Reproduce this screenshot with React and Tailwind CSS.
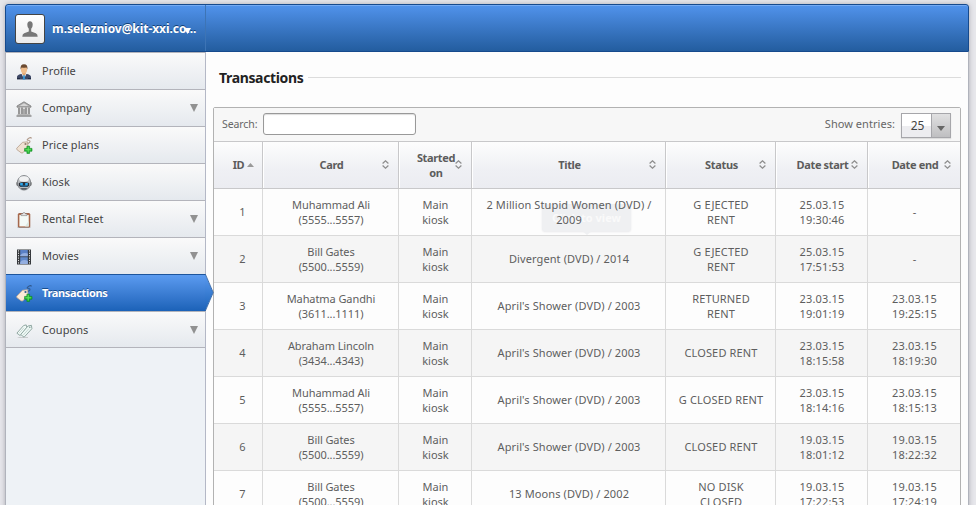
import React from 'react';

const ProfileIcon = () => (
  <svg width="16" height="16" viewBox="0 0 16 16">
    <path d="M1 15.500V13Q1 11 5 10h6q4 1 4 3v2.500z" fill="#3c4664" />
    <path d="M1 15h3v-1H1zM12 15h3v-1h-3z" fill="#1f2a42" />
    <path d="M5.500 9.800L8 15l2.500-5.200z" fill="#f4f6f9" />
    <path d="M7.300 11h1.400l.5 4.500H6.800z" fill="#2f8fd0" />
    <path d="M6.200 8h3.600v2.300L8 11.500 6.200 10.300z" fill="#dca06c" />
    <ellipse cx="8" cy="5.500" rx="3.100" ry="4" fill="#efbd8c" />
    <path d="M4.600 5.500Q4 .3 8 .3t3.400 5.200L10.500 3.600Q8 4 5.600 3.400z" fill="#6b4a30" />
  </svg>
);

const CompanyIcon = () => (
  <svg width="16" height="16" viewBox="0 0 16 16">
    <path d="M8 .8L15 5v1.200H1V5z" fill="#a9a9a9" stroke="#7d7d7d" strokeWidth=".8" />
    <path d="M8 2.300L12.500 5h-9z" fill="#d6d6d6" />
    <path d="M2 6.500h12V13H2z" fill="#dcdcdc" />
    <path d="M3 6.500V13M6 6.500V13M10 6.500V13M13 6.500V13" stroke="#7b7b7b" strokeWidth="1.400" />
    <path d="M7.500 8h1v5h-1z" fill="#777" />
    <path d="M1.500 13h13v1.300h-13z" fill="#b5b5b5" />
    <path d="M.5 14.300h15v1.400H.5z" fill="#848484" />
  </svg>
);

const TagIcon = ({ bright }) => (
  <svg width="17" height="17" viewBox="0 0 17 17">
    <path d="M9.800 7Q12.500 6.800 13.600 5.300T12.300 3.300 12.800 1.200 15 1.600" fill="none" stroke={bright ? '#315b91' : '#b29c8c'} strokeWidth="1.100" />
    <path d="M.8 11.200L6.500 5.300l5-.5.500 5L7 15.700q-1 .7-2 0L.9 12.600q-.5-.7-.1-1.400z" fill={bright ? '#fbe9d7' : '#efe1d2'} stroke={bright ? '#c7ab91' : '#b49d89'} strokeWidth=".8" />
    <circle cx="9.500" cy="7" r="1.100" fill={bright ? '#345b8b' : '#957f70'} />
    <path d="M10.900 9.200h2.700v2.200H16v2.800h-2.400v2.200h-2.700v-2.200H8.600v-2.800h2.300z" fill="#1eb32f" stroke="#0d8a20" strokeWidth=".6" />
    <path d="M12.200 10v5.500M9.400 12.800h5.800" stroke="#63e562" strokeWidth="1" />
  </svg>
);

const KioskIcon = () => (
  <svg width="16" height="16" viewBox="0 0 16 16">
    <path d="M2 6.500Q0 6.500.3 9T2 11zM14 6.500q2 0 1.700 2.500T14 11z" fill="#666" />
    <ellipse cx="8" cy="7.800" rx="6.700" ry="7.300" fill="#b9bcc0" stroke="#74777b" strokeWidth=".8" />
    <ellipse cx="8" cy="4" rx="4.900" ry="2.800" fill="#f1f2f3" />
    <path d="M2.800 8Q8 6 13.200 8v2.500q-1 1.500-2.700 1.500h-5q-1.700 0-2.700-1.500z" fill="#2b3038" />
    <path d="M4.200 8h2.600v2.500H4.200zM9.200 8h2.600v2.500H9.200z" fill="#2caaf0" />
    <path d="M5.300 10.500h5.400v1H5.300z" fill="#2378b5" />
    <path d="M4.500 13h7l-1.700 1.800H6.200z" fill="#5b5f64" />
  </svg>
);

const ClipboardIcon = () => (
  <svg width="16" height="16" viewBox="0 0 16 16">
    <rect x="2.300" y="1.600" width="11.500" height="13.600" rx=".8" fill="#b8714f" stroke="#8f4c30" strokeWidth=".8" />
    <path d="M3.400 3h9.300v11.400H3.400z" fill="#f4faf7" />
    <path d="M9 14.400L12.700 9v5.400z" fill="#dce9e3" />
    <path d="M5 3.600V1.900h1.600Q7 .4 8 .4t1.500 1.500H11v1.700z" fill="#e5e5e5" stroke="#828282" strokeWidth=".6" />
    <path d="M1.500 15.700h13" stroke="#8b8b8b" strokeWidth=".6" />
  </svg>
);

const FilmIcon = () => (
  <svg width="16" height="16" viewBox="0 0 16 16">
    <path d="M1 .5h14v15H1z" fill="#35383c" />
    <path d="M4.200 1h7.600v6.300H4.200z" fill="#5a80c6" />
    <path d="M4.200 8.200h7.600V15H4.200z" fill="#6089cc" />
    <path d="M4.200 6.200Q7 3 11.800 4.500v2.800H4.200zM4.200 13Q7 9.500 11.800 12v3H4.200z" fill="#93aee0" />
    <path d="M2.500 1.300v14M13.500 1.300v14" stroke="#e4e4e4" strokeWidth="1" strokeDasharray="1.200 1.200" />
  </svg>
);

const CouponIcon = () => (
  <svg width="17" height="16" viewBox="0 0 17 16">
    <path d="M1 13.900h11v1.200H3z" fill="#c9cccd" />
    <path d="M.9 10.200L7.500 2.600l2.700-.7.700 2.600L4.200 12.600z" fill="#f3fbf8" stroke="#87a09a" strokeWidth=".9" />
    <path d="M4.700 11.500L12 3l3.400-.7.500 3.400-7.800 8.500z" fill="#eef8f5" stroke="#87a09a" strokeWidth=".9" />
    <path d="M3 10.300l5-5.600M7.300 12l5.600-6.300" stroke="#bcd0ca" strokeWidth=".8" />
    <circle cx="13.800" cy="4.300" r=".7" fill="#74918a" />
  </svg>
);

const Down = ({ className }) => (
  <svg width="8" height="8" viewBox="0 0 8 8" className={className}>
    <path d="M0 0h8L4 8z" fill="currentColor" />
  </svg>
);

const Sort = () => (
  <svg width="7" height="9" viewBox="0 0 7 9" fill="none" stroke="#8c8c8c" strokeWidth="1.200">
    <path d="M.6 3.500L3.500.8l2.900 2.700M.6 5.500l2.900 2.700 2.900-2.700" />
  </svg>
);

const nav = [
  { label: 'Profile', icon: <ProfileIcon /> },
  { label: 'Company', icon: <CompanyIcon />, more: true },
  { label: 'Price plans', icon: <TagIcon /> },
  { label: 'Kiosk', icon: <KioskIcon /> },
  { label: 'Rental Fleet', icon: <ClipboardIcon />, more: true },
  { label: 'Movies', icon: <FilmIcon />, more: true },
  { label: 'Transactions', icon: <TagIcon bright />, active: true },
  { label: 'Coupons', icon: <CouponIcon />, more: true },
];

const columns = ['ID', 'Card', 'Started\non', 'Title', 'Status', 'Date start', 'Date end'];

const rows = [
  ['1', 'Muhammad Ali\n(5555...5557)', 'Main\nkiosk', '2 Million Stupid Women (DVD) /\n2009', 'G EJECTED\nRENT', '25.03.15\n19:30:46', '-'],
  ['2', 'Bill Gates\n(5500...5559)', 'Main\nkiosk', 'Divergent (DVD) / 2014', 'G EJECTED\nRENT', '25.03.15\n17:51:53', '-'],
  ['3', 'Mahatma Gandhi\n(3611...1111)', 'Main\nkiosk', "April's Shower (DVD) / 2003", 'RETURNED\nRENT', '23.03.15\n19:01:19', '23.03.15\n19:25:15'],
  ['4', 'Abraham Lincoln\n(3434...4343)', 'Main\nkiosk', "April's Shower (DVD) / 2003", 'CLOSED RENT', '23.03.15\n18:15:58', '23.03.15\n18:19:30'],
  ['5', 'Muhammad Ali\n(5555...5557)', 'Main\nkiosk', "April's Shower (DVD) / 2003", 'G CLOSED RENT', '23.03.15\n18:14:16', '23.03.15\n18:15:13'],
  ['6', 'Bill Gates\n(5500...5559)', 'Main\nkiosk', "April's Shower (DVD) / 2003", 'CLOSED RENT', '19.03.15\n18:01:12', '19.03.15\n18:22:32'],
  ['7', 'Bill Gates\n(5500...5559)', 'Main\nkiosk', '13 Moons (DVD) / 2002', 'NO DISK\nCLOSED', '19.03.15\n17:22:53', '19.03.15\n17:24:19'],
];

const GRID = 'grid grid-cols-[49px_136px_73px_194px_110px_92px_92px]';

const cellTone = [
  'pl-[9px]',
  'pl-px tracking-[-0.08px]',
  'pl-px tracking-[0px]',
  'pl-px tracking-[0.11px]',
  'pl-px tracking-[0.15px]',
  'pl-px tracking-[0.15px]',
  'pl-px tracking-[0.15px]',
];

function Header() {
  return (
    <header className="flex h-12 shrink-0 items-stretch rounded-t-[3px] border border-[#164a8d] bg-linear-to-b from-[#5193ec] to-[#235d9f] shadow-[inset_0_1px_0_#75aaf2]">
      <div className="flex w-[200px] items-center border-r border-[#3d74b5] pl-[9px]">
        <div className="mt-px flex size-[30px] shrink-0 items-center justify-center rounded-[3px] border border-[#444] bg-linear-to-b from-white to-[#ececec]">
          <svg width="16" height="16" viewBox="0 0 16 16">
            <path d="M8 .3q2.700 0 2.700 3.500 0 2.500-1.500 4v2.700l4.600 1.700q1.900.8 1.900 3.500H.3q0-2.700 1.900-3.500l4.600-1.700V7.800Q5.300 6.300 5.300 3.800 5.300.3 8 .3z" fill="#777" />
          </svg>
        </div>
        <div className="relative mt-px ml-[7px] whitespace-nowrap text-[12px] font-bold tracking-[-0.06px] text-white [text-shadow:0_-1px_0_#123e75]">
          m.selezniov@kit-xxi.co...
          <svg className="absolute top-[8px] right-[5px]" width="7" height="6" viewBox="0 0 7 6">
            <path d="M0 0h7L3.500 6z" fill="#fff" />
          </svg>
        </div>
      </div>
    </header>
  );
}

function NavItem({ item }) {
  const tone = item.active
    ? 'border-[#1d559c] bg-linear-to-b from-[#5b9bf0] to-[#1b62b8] text-white font-bold tracking-[-0.35px] [text-shadow:0_-1px_0_#174d8f]'
    : 'last:h-9 last:pt-px border-[#b3b4bb] bg-linear-to-b from-[#fafafa] to-[#e5e9ee] text-[#444] tracking-[0.08px]';
  return (
    <li className={`relative flex h-[37px] items-center border-t pr-[7px] pl-[10px] ${tone}`}>
      <span className="flex w-[26px] shrink-0 pt-px">{item.icon}</span>
      <span className="text-[11px]">{item.label}</span>
      {item.more && <Down className="mb-px ml-auto text-[#919191]" />}
      {item.active && (
        <svg className="absolute -top-px left-full z-10" width="9" height="37" viewBox="0 0 9 37">
          <defs>
            <linearGradient id="tip" x1="0" y1="0" x2="0" y2="1">
              <stop offset="0" stopColor="#5b9bf0" />
              <stop offset="1" stopColor="#1b62b8" />
            </linearGradient>
          </defs>
          <path d="M0 0L8 18.500 0 37z" fill="url(#tip)" />
          <path d="M.3 0l7.900 18.500L.3 37" fill="none" stroke="#1d559c" strokeWidth=".8" />
        </svg>
      )}
    </li>
  );
}

function TableHead() {
  return (
    <div className={`${GRID} h-[47px] shrink-0 border-b border-[#c8c8ca]`}>
      {columns.map((name, i) => (
        <div
          key={name}
          className={`relative flex items-center justify-center whitespace-pre bg-linear-to-b from-[#fdfdfd] via-[#eff0f4] via-60% to-[#ebecf1] pb-px pl-px text-center text-[11px] leading-[15px] font-bold tracking-[-0.35px] text-[#5c5c5c] ${i < 6 ? 'border-r border-[#c8c8ca]' : ''} ${i > 0 ? 'border-l border-l-white' : ''}`}
        >
          <span>{name}</span>
          <span className="absolute top-[18px] right-[9px]">
            {i === 0 ? (
              <svg width="7" height="4" viewBox="0 0 7 4" className="mt-[3px] -mr-px block">
                <path d="M0 4l3.500-4L7 4z" fill="#999" />
              </svg>
            ) : (
              <span className="block"><Sort /></span>
            )}
          </span>
        </div>
      ))}
    </div>
  );
}

function Tooltip() {
  return (
    <div className="absolute top-[15px] left-[70px] flex h-[27px] w-[89px] items-center justify-center rounded-[3px] bg-[#eff0f2] text-[11px] font-bold tracking-[0px] text-[#fafafa] shadow-[0_1px_2px_#e9e9ec]">
      Click to view
      <svg className="absolute top-full left-[40px]" width="10" height="4" viewBox="0 0 10 4">
        <path d="M0 0h10L5 4z" fill="#eff0f2" />
      </svg>
    </div>
  );
}

function Row({ cells, index }) {
  return (
    <div className={`${GRID} h-[47px] shrink-0 border-b border-[#dadada] ${index % 2 ? 'bg-[#f5f5f5]' : 'bg-[#fdfdfd]'}`}>
      {cells.map((text, i) => (
        <div
          key={i}
          className={`relative flex items-center justify-center whitespace-pre pb-px text-center text-[11px] leading-[15px] text-[#5e5e5e] ${i < 6 ? 'border-r border-[#dadada]' : ''} ${cellTone[i]}`}
        >
          {index === 0 && i === 3 && <Tooltip />}
          <span className="relative">{text}</span>
        </div>
      ))}
    </div>
  );
}

export default function App() {
  return (
    <div className="h-[505px] w-[976px] overflow-hidden bg-[#e7e7eb] pt-1 pl-[5px] font-['Noto_Sans','Open_Sans',sans-serif]">
      <div className="flex h-[520px] w-[964px] flex-col rounded-t-[3px] shadow-[0_0_5px_#aaaab2]">
        <Header />
        <div className="flex min-h-0 flex-1 border-x border-[#b0b3bc] bg-[#fdfdfd]">
          <nav className="w-[200px] shrink-0 border-r border-[#b4b8c6] bg-[#eef2f6]">
            <ul className="border-b border-[#b3b4bb]">
              {nav.map((item) => (
                <NavItem key={item.label} item={item} />
              ))}
            </ul>
          </nav>
          <main className="flex min-w-0 flex-1 flex-col px-[7px]">
            <div className="mt-[15px] flex h-[22px] items-center pl-[6px]">
              <h1 className="text-[14px] font-bold tracking-[-0.35px] text-[#222]">Transactions</h1>
              <div className="ml-[5px] h-px flex-1 bg-[#dcdcdc]" />
            </div>
            <section className="mt-[19px] flex h-[440px] shrink-0 flex-col rounded-t-[2px] border border-[#b2b2b2] bg-[#fdfdfd]">
              <div className="flex h-[34px] shrink-0 items-center border-b border-[#c8c8ca] bg-[#f7f7f7] pr-[9px] pl-2 text-[11px] text-[#666]">
                <label className="w-[41px] text-[10.500px] tracking-[-0.1px]">Search:</label>
                <input className="mb-px h-[22px] w-[153px] rounded-[3px] border border-[#999] bg-white shadow-[inset_0_1px_1px_#ddd]" />
                <span className="ml-auto tracking-[0.05px]">Show entries:</span>
                <div className="mt-[2px] ml-[6px] flex h-[25px] w-[50px] border border-[#a6a6aa] text-[12px] text-[#444] shadow-[0_1px_1px_#ddd]">
                  <span className="flex flex-1 items-center justify-center border-r border-[#a6a6aa] bg-linear-to-b from-white from-50% to-[#ededf0] to-50% pl-[2px]">25</span>
                  <span className="flex w-[18px] items-center justify-center bg-linear-to-b from-[#e0e0e1] to-[#bfbfc1] pt-[6px]">
                    <svg width="8" height="5" viewBox="0 0 8 5">
                      <path d="M0 0h8L4 5z" fill="#666" />
                    </svg>
                  </span>
                </div>
              </div>
              <TableHead />
              {rows.map((cells, i) => (
                <Row key={cells[0]} cells={cells} index={i} />
              ))}
            </section>
          </main>
        </div>
      </div>
    </div>
  );
}
